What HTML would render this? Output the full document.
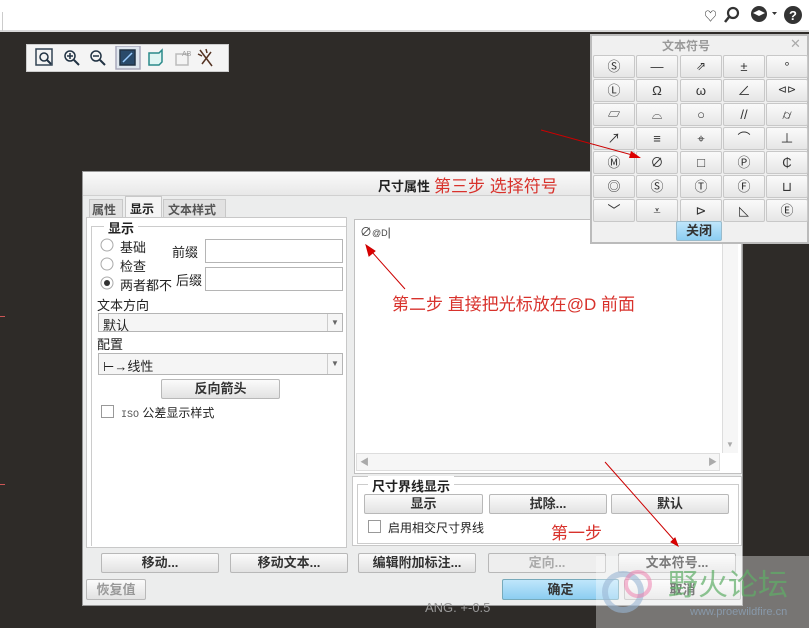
<!DOCTYPE html>
<html><head><meta charset="utf-8"><style>
*{box-sizing:border-box;margin:0;padding:0}
body{width:809px;height:628px;background:#2e2b28;position:relative;overflow:hidden;font-family:"Liberation Sans","Noto Sans CJK SC",sans-serif;font-size:12px;color:#222}
.a{position:absolute;white-space:nowrap}
.btn{position:absolute;background:linear-gradient(#fbfbfb,#e2e2e2);border:1px solid #b8b8b8;border-radius:2px;text-align:center;font-size:12px;font-weight:bold;color:#333;white-space:nowrap}
.in{position:absolute;background:#fff;border:1px solid #b5b5b5;white-space:nowrap}
.red{color:#d8322c;font-size:17px;position:absolute;white-space:nowrap;font-family:"Liberation Sans","Noto Sans CJK SC",sans-serif}
.cell{position:absolute;width:42px;height:23px;background:linear-gradient(#fafafa,#e6e6e6);border:1px solid #c8c8c8;border-radius:2px;text-align:center;line-height:21px;font-size:13px;color:#333}
</style></head><body>
<div class="a" style="left:0;top:0;width:809px;height:32px;background:#fff;border-bottom:2px solid #d8d8d8"></div>
<div class="a" style="left:0;top:12px;width:3px;height:19px;border-right:1px solid #ccc"></div>
<div class="a" style="left:704px;top:6px;font-size:13px;color:#333">♡</div>
<svg class="a" style="left:722px;top:5px" width="85" height="20"><circle cx="11" cy="8" r="5" fill="none" stroke="#333" stroke-width="2.2"/><line x1="7" y1="12" x2="3" y2="17" stroke="#333" stroke-width="2.5"/><circle cx="37" cy="9" r="8" fill="#333"/><path d="M31 8l6-3 6 3-6 3z" fill="#fff"/><path d="M50 7h5l-2.5 3z" fill="#333"/><circle cx="71" cy="10" r="9" fill="#333"/><text x="71" y="15" fill="#fff" font-size="13" font-weight="bold" text-anchor="middle" font-family="Liberation Sans">?</text></svg>
<div class="a" style="left:26px;top:44px;width:203px;height:28px;background:#f4f4f4;border:1px solid #ccc"></div>
<svg class="a" style="left:30px;top:46px" width="196" height="24" fill="none" stroke="#234" stroke-width="1.5">
<rect x="6" y="3" width="16" height="16" stroke="#345"/><circle cx="14" cy="11" r="4"/><line x1="17" y1="14" x2="21" y2="18" stroke-width="2"/>
<circle cx="40" cy="10" r="5"/><line x1="44" y1="14" x2="49" y2="19" stroke-width="2"/><path d="M37 10h6M40 7v6"/>
<circle cx="66" cy="10" r="5"/><line x1="70" y1="14" x2="75" y2="19" stroke-width="2"/><path d="M63 10h6"/>
<rect x="86" y="0" width="24" height="23" fill="#dfe6ee" stroke="#aab"/><rect x="90" y="4" width="15" height="15" fill="#2a4a6a"/><path d="M93 16l9-9" stroke="#9cf"/>
<path d="M119 7h10l3-3v12l-3 3h-10z" fill="#dff5f3" stroke="#2a8a8a"/>
<path d="M146 8h12v11h-12z" stroke="#bbb"/><text x="152" y="10" font-size="7" fill="#999" stroke="none">AB</text>
<path d="M170 4l12 16M181 6l-9 12M168 8l4 2M176 3l1 4" stroke="#532"/>
</svg>
<div class="a" style="left:0;top:316px;width:5px;height:1px;background:#c55"></div>
<div class="a" style="left:0;top:484px;width:5px;height:1px;background:#c55"></div>

<!-- dialog -->
<div class="a" style="left:82px;top:171px;width:661px;height:435px;background:#eceded;border:1px solid #999"></div>
<div class="a" style="left:83px;top:172px;width:659px;height:24px;background:linear-gradient(#fafafa,#e8e8e8);border-bottom:1px solid #d0d0d0"></div>
<div class="a" style="left:378px;top:176px;font-weight:bold;font-size:13px">尺寸属性</div>
<div class="red" style="left:434px;top:172px">第三步 选择符号</div>
<div class="a" style="left:89px;top:199px;width:34px;height:19px;background:#e2e2e2;border:1px solid #c8c8c8;font-weight:bold;color:#555;padding:1px 2px;font-size:12px">属性</div>
<div class="a" style="left:125px;top:196px;width:37px;height:22px;background:#f5f5f5;border:1px solid #c8c8c8;border-bottom:none;font-weight:bold;padding:3px 4px;font-size:12px">显示</div>
<div class="a" style="left:163px;top:199px;width:63px;height:19px;background:#e2e2e2;border:1px solid #c8c8c8;font-weight:bold;color:#555;padding:1px 4px;font-size:12px">文本样式</div>
<div class="a" style="left:86px;top:217px;width:261px;height:331px;background:#fff;border:1px solid #c8c8c8"></div>
<div class="a" style="left:91px;top:226px;width:255px;height:320px;border:1px solid #ccc;border-bottom:none;border-right:none"></div>
<div class="a" style="left:104px;top:218px;background:#fff;padding:0 4px;font-weight:bold;font-size:13px">显示</div>
<svg class="a" style="left:100px;top:238px" width="16" height="52"><circle cx="7" cy="7" r="6" fill="#fff" stroke="#aaa"/><circle cx="7" cy="26" r="6" fill="#fff" stroke="#aaa"/><circle cx="7" cy="45" r="6" fill="#fff" stroke="#aaa"/><circle cx="7" cy="45" r="3" fill="#333"/></svg>
<div class="a" style="left:120px;top:238px;font-size:13px;line-height:19px">基础<br>检查<br>两者都不</div>
<div class="a" style="left:172px;top:242px;font-size:13px">前缀</div>
<div class="a" style="left:176px;top:270px;font-size:13px">后缀</div>
<div class="in" style="left:205px;top:239px;width:138px;height:24px"></div>
<div class="in" style="left:205px;top:267px;width:138px;height:24px"></div>
<div class="a" style="left:97px;top:295px;font-size:13px">文本方向</div>
<div class="in" style="left:98px;top:313px;width:245px;height:19px;background:#f5f5f5;padding:1px 4px;font-size:13px">默认</div>
<div class="a" style="left:97px;top:334px;font-size:13px">配置</div>
<div class="in" style="left:98px;top:353px;width:245px;height:22px;background:#f5f5f5;padding:2px 4px;font-size:13px">⊢→线性</div>
<div class="a" style="left:327px;top:314px;width:15px;height:17px;border-left:1px solid #ccc;font-size:8px;color:#666;text-align:center;line-height:17px">▼</div>
<div class="a" style="left:327px;top:354px;width:15px;height:20px;border-left:1px solid #ccc;font-size:8px;color:#666;text-align:center;line-height:20px">▼</div>
<div class="btn" style="left:161px;top:379px;width:119px;height:20px;line-height:18px;font-size:13px">反向箭头</div>
<div class="a" style="left:101px;top:405px;width:13px;height:13px;border:1px solid #999;background:#fff"></div>
<div class="a" style="left:121px;top:404px;font-size:12px"><span style="font-family:'Liberation Mono';font-size:10px;color:#555">ISO</span> 公差显示样式</div>

<div class="a" style="left:354px;top:219px;width:388px;height:255px;background:#fff;border:1px solid #c0c0c0"></div>
<div class="a" style="left:360px;top:223px;font-size:12px;color:#444">∅<span style="font-size:9px">@D</span>|</div>
<div class="a" style="left:722px;top:220px;width:16px;height:233px;background:#f6f6f6;border-left:1px solid #ddd"></div>
<div class="a" style="left:356px;top:453px;width:364px;height:18px;background:#f6f6f6;border:1px solid #ddd"></div>
<div class="a" style="left:360px;top:455px;font-size:9px;color:#aaa">◀</div>
<div class="a" style="left:708px;top:455px;font-size:9px;color:#aaa">▶</div>
<div class="a" style="left:726px;top:440px;font-size:8px;color:#aaa">▼</div>
<div class="red" style="left:392px;top:290px">第二步 直接把光标放在@D 前面</div>

<div class="a" style="left:352px;top:476px;width:390px;height:70px;background:#fff;border:1px solid #c8c8c8"></div>
<div class="a" style="left:357px;top:484px;width:382px;height:60px;border:1px solid #ccc"></div>
<div class="a" style="left:368px;top:476px;background:#fff;padding:0 4px;font-weight:bold;font-size:13px">尺寸界线显示</div>
<div class="btn" style="left:364px;top:494px;width:119px;height:20px;line-height:18px;font-size:13px">显示</div>
<div class="btn" style="left:489px;top:494px;width:118px;height:20px;line-height:18px;font-size:13px">拭除...</div>
<div class="btn" style="left:611px;top:494px;width:118px;height:20px;line-height:18px;font-size:13px">默认</div>
<div class="a" style="left:368px;top:520px;width:13px;height:13px;border:1px solid #999;background:#fff"></div>
<div class="a" style="left:388px;top:519px;font-size:12px">启用相交尺寸界线</div>
<div class="red" style="left:551px;top:519px">第一步</div>

<div class="btn" style="left:101px;top:553px;width:118px;height:20px;line-height:18px;font-size:13px">移动...</div>
<div class="btn" style="left:230px;top:553px;width:118px;height:20px;line-height:18px;font-size:13px">移动文本...</div>
<div class="btn" style="left:358px;top:553px;width:118px;height:20px;line-height:18px;font-size:13px">编辑附加标注...</div>
<div class="btn" style="left:488px;top:553px;width:118px;height:20px;line-height:18px;font-size:13px;color:#aaa;background:#eee">定向...</div>
<div class="btn" style="left:618px;top:553px;width:118px;height:20px;line-height:18px;font-size:13px">文本符号...</div>
<div class="btn" style="left:86px;top:579px;width:60px;height:21px;line-height:19px;font-size:13px;color:#999">恢复值</div>
<div class="btn" style="left:502px;top:579px;width:117px;height:21px;line-height:19px;font-size:13px;background:linear-gradient(#bfe6fb,#8ccdf1);border-color:#7ab">确定</div>
<div class="btn" style="left:624px;top:579px;width:117px;height:21px;line-height:19px;font-size:13px">取消</div>
<div class="a" style="left:425px;top:600px;color:#999;font-size:13px">ANG. +-0.5</div>
<div class="a" style="left:596px;top:556px;width:213px;height:72px;background:rgba(255,255,255,0.35)"></div>
<div class="a" style="left:668px;top:560px;font-size:30px;color:#5fae67;opacity:.7;font-family:'Noto Sans CJK SC',sans-serif">野火论坛</div>
<div class="a" style="left:690px;top:606px;font-size:11px;color:#89a">www.proewildfire.cn</div>
<svg class="a" style="left:598px;top:562px" width="70" height="60"><circle cx="25" cy="30" r="18" fill="none" stroke="#9ab5d4" stroke-width="6" opacity=".6"/><circle cx="40" cy="22" r="12" fill="none" stroke="#e7a" stroke-width="4" opacity=".5"/></svg>

<!-- arrows -->
<svg class="a" style="left:0;top:0" width="809" height="628" fill="#d00" stroke="#c00" stroke-width="1">
<line x1="405" y1="289" x2="372" y2="252"/><path d="M366 245l3 11 6-5z"/>
<line x1="605" y1="462" x2="674" y2="540"/><path d="M678 546l-7-4 4-4z"/>
</svg>

<!-- palette -->
<div class="a" style="left:590px;top:34px;width:219px;height:210px;background:#f0f0f0;border:2px solid #bbb"></div>
<div class="a" style="left:662px;top:37px;color:#999;font-weight:bold;font-size:12px">文本符号</div>
<div class="a" style="left:790px;top:36px;color:#aaa;font-size:13px">✕</div>
<div class="cell" style="left:593px;top:55px">Ⓢ</div>
<div class="cell" style="left:636px;top:55px">—</div>
<div class="cell" style="left:680px;top:55px;font-size:12px">⇗</div>
<div class="cell" style="left:723px;top:55px">±</div>
<div class="cell" style="left:766px;top:55px">°</div>
<div class="cell" style="left:593px;top:79px">Ⓛ</div>
<div class="cell" style="left:636px;top:79px">Ω</div>
<div class="cell" style="left:680px;top:79px">ω</div>
<div class="cell" style="left:723px;top:79px">∠</div>
<div class="cell" style="left:766px;top:79px;font-size:11px">⊲⊳</div>
<div class="cell" style="left:593px;top:103px">▱</div>
<div class="cell" style="left:636px;top:103px">⌓</div>
<div class="cell" style="left:680px;top:103px">○</div>
<div class="cell" style="left:723px;top:103px">//</div>
<div class="cell" style="left:766px;top:103px">⌭</div>
<div class="cell" style="left:593px;top:127px">↗</div>
<div class="cell" style="left:636px;top:127px">≡</div>
<div class="cell" style="left:680px;top:127px">⌖</div>
<div class="cell" style="left:723px;top:127px">⌒</div>
<div class="cell" style="left:766px;top:127px">⊥</div>
<div class="cell" style="left:593px;top:151px">Ⓜ</div>
<div class="cell" style="left:636px;top:151px">∅</div>
<div class="cell" style="left:680px;top:151px">□</div>
<div class="cell" style="left:723px;top:151px">Ⓟ</div>
<div class="cell" style="left:766px;top:151px">₵</div>
<div class="cell" style="left:593px;top:175px">◎</div>
<div class="cell" style="left:636px;top:175px">Ⓢ</div>
<div class="cell" style="left:680px;top:175px">Ⓣ</div>
<div class="cell" style="left:723px;top:175px">Ⓕ</div>
<div class="cell" style="left:766px;top:175px">⊔</div>
<div class="cell" style="left:593px;top:199px">﹀</div>
<div class="cell" style="left:636px;top:199px">⩡</div>
<div class="cell" style="left:680px;top:199px">⊳</div>
<div class="cell" style="left:723px;top:199px">◺</div>
<div class="cell" style="left:766px;top:199px">Ⓔ</div>
<div class="btn" style="left:676px;top:221px;width:46px;height:20px;line-height:18px;font-size:13px;background:linear-gradient(#bfe6fb,#8ccdf1);border-color:#9bc">关闭</div>
<svg class="a" style="left:541px;top:128px" width="100" height="35"><line x1="0" y1="2" x2="95" y2="28" stroke="#c00"/><path d="M100 30l-10-7-2 7z" fill="#d00"/></svg>
</body></html>
